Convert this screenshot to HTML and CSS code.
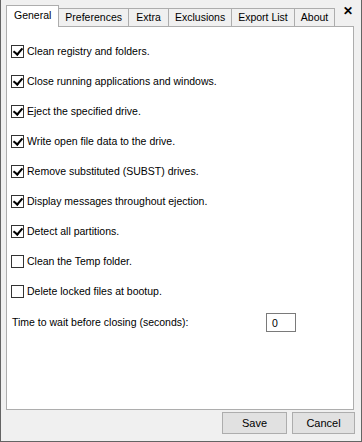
FILE: index.html
```html
<!DOCTYPE html>
<html lang="en">
<head>
    <meta charset="UTF-8">
    <title>Options</title>
    <link rel="stylesheet" href="styles.css">
</head>
<body>
    <div class="window">
        <div class="tab-bar">
            <div class="tab active">General</div>
            <div class="tab">Preferences</div>
            <div class="tab">Extra</div>
            <div class="tab">Exclusions</div>
            <div class="tab">Export List</div>
            <div class="tab">About</div>
            <span class="close">&#x2715;</span>
        </div>

        <div class="panel">
            <label class="row"><span class="box checked"></span>Clean registry and folders.</label>
            <label class="row"><span class="box checked"></span>Close running applications and windows.</label>
            <label class="row"><span class="box checked"></span>Eject the specified drive.</label>
            <label class="row"><span class="box checked"></span>Write open file data to the drive.</label>
            <label class="row"><span class="box checked"></span>Remove substituted (SUBST) drives.</label>
            <label class="row"><span class="box checked"></span>Display messages throughout ejection.</label>
            <label class="row"><span class="box checked"></span>Detect all partitions.</label>
            <label class="row"><span class="box"></span>Clean the Temp folder.</label>
            <label class="row"><span class="box"></span>Delete locked files at bootup.</label>

            <div class="row wait">
                <span class="wait-label">Time to wait before closing (seconds):</span>
                <span class="num">0</span>
            </div>
        </div>

        <div class="footer">
            <button class="btn">Save</button>
            <button class="btn">Cancel</button>
        </div>
    </div>
</body>
</html>
```

FILE: styles.css
```css
* { margin: 0; padding: 0; box-sizing: border-box; }
body { font-family: 'Liberation Sans', Arial, sans-serif; font-size: 10.5px; color: #000; background: #f0f0f0; }

.window {
    width: 362px;
    height: 442px;
    background: #f0f0f0;
    border: 1px solid #646464;
    border-top: none;
    display: flex;
    flex-direction: column;
}

/* tabs */
.tab-bar {
    position: relative;
    height: 26px;
    padding-left: 5px;
    display: flex;
    align-items: flex-end;
}
.tab {
    height: 18px;
    min-width: 41px;
    padding: 0 6px;
    line-height: 17px;
    text-align: center;
    border: 1px solid #adadad;
    border-bottom: none;
    margin-left: -1px;
    background: #f0f0f0;
    white-space: nowrap;
}
.tab:first-child { margin-left: 0; }
.tab.active {
    position: relative;
    z-index: 2;
    height: 22px;
    margin-bottom: -1px;
    background: #fff;
    padding: 0 7px;
    line-height: 19px;
}
.close {
    position: absolute;
    right: 8px;
    top: 4px;
    font-size: 12px;
    font-weight: bold;
}

/* panel */
.panel {
    height: 384px;
    margin: 0 7px 0 5px;
    padding: 9px 4px 0;
    background: #fff;
    border: 1px solid #adadad;
}
.row {
    height: 30px;
    display: flex;
    align-items: center;
}
.box {
    width: 13px;
    height: 13px;
    margin-right: 3px;
    border: 1px solid #333;
    background: #fff;
    position: relative;
}
.box.checked::after {
    content: "";
    position: absolute;
    left: 3px;
    top: 0px;
    width: 4px;
    height: 7px;
    border: solid #000;
    border-width: 0 2px 2px 0;
    transform: rotate(40deg);
}
.wait { margin-top: 1px; padding-left: 1px; }
.wait-label { width: 254px; }
.num {
    width: 30px;
    height: 19px;
    border: 1px solid #7a7a7a;
    padding: 2px 0 0 5px;
    line-height: 14px;
}

/* buttons */
.footer {
    display: flex;
    justify-content: flex-end;
    gap: 5px;
    padding: 2px 6px 0 0;
}
.btn {
    width: 65px;
    height: 22px;
    font-family: inherit;
    font-size: 11px;
    background: #e1e1e1;
    border: 1px solid #adadad;
}
.btn:last-child { width: 63px; }
```
